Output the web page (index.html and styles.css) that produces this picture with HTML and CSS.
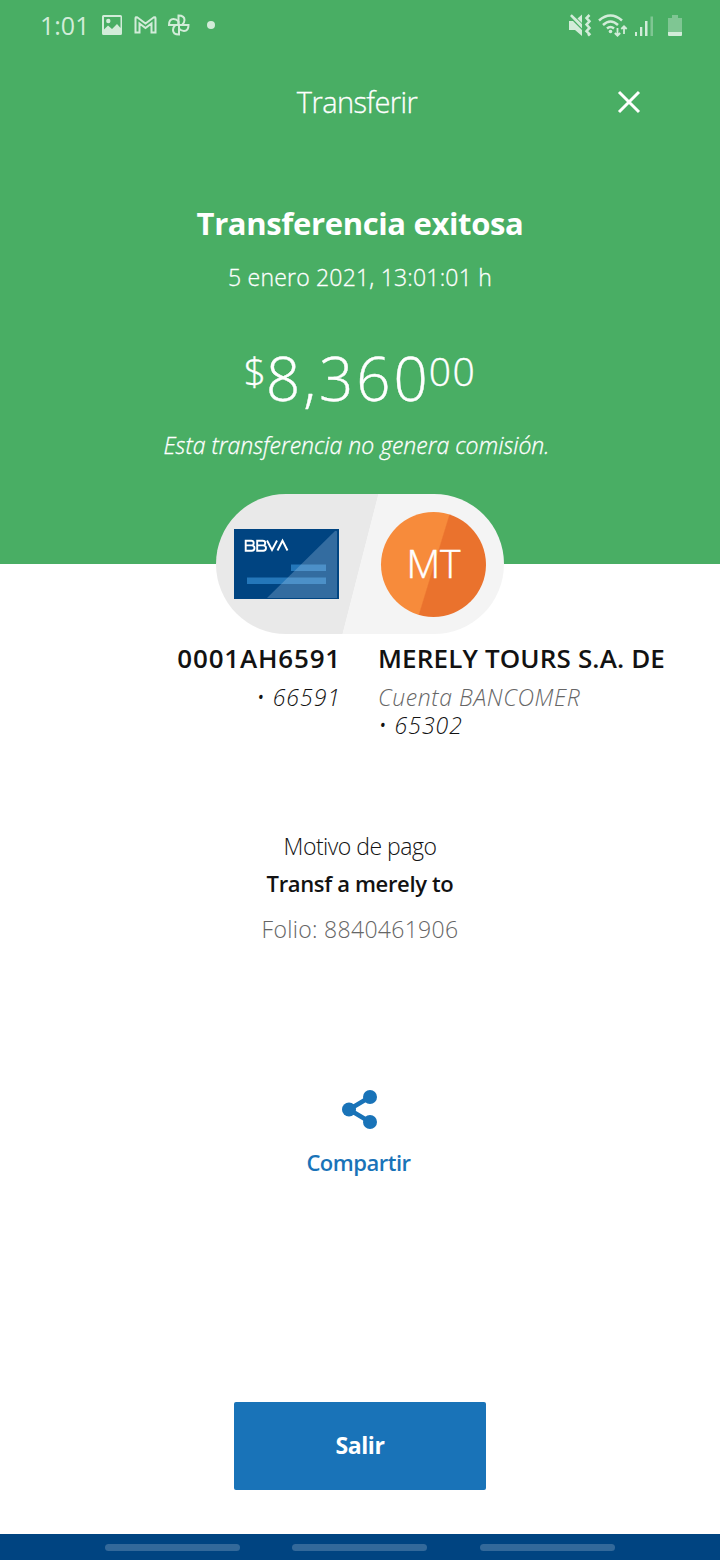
FILE: index.html
```html
<!DOCTYPE html>
<html lang="es">
<head>
  <meta charset="UTF-8" />
  <meta name="viewport" content="width=device-width, initial-scale=1.0"/>
  <title>Transferir</title>
  <link rel="stylesheet" href="styles.css">
</head>
<body>

  <section class="hero">
    <div class="status">
      <span class="clock">1:01</span>
      <svg class="status-left" width="120" height="26" viewBox="0 0 120 26">
        <path fill-rule="evenodd" d="M2.500 3h17q1.500 0 1.500 1.500v17q0 1.500-1.500 1.500h-17q-1.500 0-1.500-1.500v-17q0-1.500 1.500-1.500zM3 5v12.500l4-4 4 3.500 5-5 3.500 4V5z"/>
        <circle cx="7.300" cy="9" r="2.200"/>
        <path class="line" d="M34.500 20.500V6.500q0-2 2-1l8 6 8-6q2-1 2 1v14h-4v-9l-6 4.500-6-4.500v9z"/>
        <g class="line">
          <path d="M77.500 13V3.500q6 0 6 4.500 0 3-2.500 5z"/>
          <path d="M78 13h9.500q0 6-4.500 6-3 0-5-2.500z"/>
          <path d="M78 13v9.500q-6 0-6-4.500 0-3 2.500-5z"/>
          <path d="M77.500 13H68q0-6 4.500-6 3 0 5 2.500z"/>
        </g>
        <circle cx="110" cy="13" r="4"/>
      </svg>
      <svg class="status-right" width="120" height="26" viewBox="0 0 120 26">
        <path d="M1 9h4l9 9v6l-7-6H1zM9.500 6.500l4.500-4V11zM2 4l1.800-1.800L14 12v4.500z"/>
        <path class="line wave" d="M21.500 3l-3 3 3 3.300-3 3.300 3 3.300-3 3.300 3 3-1.500 1.500"/>
        <path class="line wave" d="M31 8.500q11.500-10 23 0M35 13q7.500-7 15 0M39 16.500q3.500-3 7 0"/>
        <circle cx="42.500" cy="19.500" r="1.800"/>
        <path class="line arrows" d="M49.500 16v7.500M46.800 21l2.700 2.700 2.700-2.700M56 22v-7.500M53.300 17l2.700-2.700 2.700 2.700"/>
        <path d="M67 20h2v4h-2zM72 15h2.300v9H72zM77 9h2.500v15H77z"/>
        <path opacity=".4" d="M82.500 4.500H85V24h-2.500z"/>
        <path opacity=".4" d="M104 3h6v3h4v14h-14V6h4z"/>
        <path d="M100 20h14v3q0 1-1 1h-12q-1 0-1-1z"/>
      </svg>
    </div>

    <header>
      <h1>Transferir</h1>
      <svg class="close" width="26" height="26" viewBox="0 0 26 26">
        <path d="M3 3l20 20M23 3L3 23"/>
      </svg>
    </header>

    <h2>Transferencia exitosa</h2>
    <p class="date">5 enero 2021, 13:01:01 h</p>
    <div class="amount">
      <span class="small">$</span><span class="big">8,360</span><span class="small cents">00</span>
    </div>
    <p class="note">Esta transferencia no genera comisión.</p>
  </section>

  <section class="accounts">
    <div class="pill">
      <svg class="card" width="105" height="70" viewBox="0 0 105 70">
        <rect width="105" height="70" fill="#004481"/>
        <rect x="57" y="35.500" width="35" height="6.500" fill="#2477ba"/>
        <rect x="13" y="48.500" width="79" height="6.500" fill="#2477ba"/>
        <path d="M33 69L101 2q2-1 2 1v66z" fill="#a8cbe8" opacity=".3"/>
        <g class="bbva">
          <path d="M11.700 11.800h5.500q2.500 0 2.500 2.300t-2.500 2.300h-5.500h6q2.800 0 2.800 2.700t-2.800 2.700h-6z"/>
          <path d="M23.200 11.800h5.500q2.500 0 2.500 2.300t-2.500 2.300h-5.500h6q2.800 0 2.800 2.700t-2.800 2.700h-6z"/>
          <path d="M33 11.500l5 9.500 5-9.500M43.500 21.500l5-9.800 5 9.800"/>
        </g>
      </svg>
      <div class="avatar">MT</div>
    </div>
    <div class="names">
      <div class="from">
        <h3>0001AH6591</h3>
        <p>• 66591</p>
      </div>
      <div class="to">
        <h3>MERELY TOURS S.A. DE</h3>
        <p class="bank">Cuenta BANCOMER</p>
        <p>• 65302</p>
      </div>
    </div>
  </section>

  <section class="details">
    <p class="label">Motivo de pago</p>
    <p class="reason">Transf a merely to</p>
    <p class="folio">Folio: 8840461906</p>
  </section>

  <section class="share">
    <svg width="36" height="40" viewBox="0 0 36 40">
      <path d="M28 7L7 19.500 28 32"/>
      <circle cx="28" cy="7" r="7"/>
      <circle cx="7" cy="19.500" r="7"/>
      <circle cx="28" cy="32" r="7"/>
    </svg>
    <span>Compartir</span>
  </section>

  <button class="exit">Salir</button>

  <nav>
    <span></span>
    <span></span>
    <span></span>
  </nav>

</body>
</html>
```
FILE: styles.css
```css
* {
  margin: 0; padding: 0; box-sizing: border-box;
  font-family: 'Open Sans', sans-serif;
}

body {
  height: 1560px;
  display: flex;
  flex-direction: column;
  background: #fff;
  color: #121212;
  font-size: 23px;
  font-weight: 300;
  overflow: hidden;
}

p {
  white-space: nowrap;
}

.hero {
  height: 564px;
  flex-shrink: 0;
  background: #49ae64;
  color: #fff;
  text-align: center;
}

.status {
  height: 50px;
  padding: 0 32px 0 40px;
  display: flex;
  align-items: center;
  color: #d2ecd9;
}

.status svg {
  fill: #d2ecd9;
}

.status .line {
  fill: none;
  stroke: #d2ecd9;
  stroke-width: 2;
}

.status .wave {
  stroke-width: 2.5;
}

.status .arrows {
  stroke-width: 1.8;
}

.clock {
  width: 61px;
  font-size: 25px;
  font-weight: 400;
  text-align: left;
}

.status-right {
  margin-left: auto;
}

header {
  height: 102px;
  padding: 0 78px 0 98px;
  display: flex;
  align-items: center;
}

header h1 {
  flex: 1;
  font-size: 29px;
  font-weight: 300;
  letter-spacing: -0.6px;
  -webkit-text-stroke: 0.3px;
}

.close {
  margin-top: 1px;
  fill: none;
  stroke: #fff;
  stroke-width: 3;
}

.hero h2 {
  margin-top: 51px;
  font-size: 31px;
  font-weight: 700;
  line-height: 40px;
  letter-spacing: -0.35px;
}

.date {
  margin-top: 18px;
  line-height: 32px;
  letter-spacing: 0.2px;
  -webkit-text-stroke: 0.3px;
}

.amount {
  margin-top: 55px;
  height: 60px;
  display: flex;
  justify-content: center;
  -webkit-text-stroke: 0.4px;
}

.big {
  font-size: 60px;
  line-height: 60px;
  letter-spacing: 3px;
}

.small {
  font-size: 39px;
  line-height: 45px;
}

.cents {
  margin-left: -2px;
  letter-spacing: 1.5px;
}

.note {
  margin-top: 21px;
  padding-right: 7px;
  font-style: italic;
  line-height: 32px;
  -webkit-text-stroke: 0.3px;
}

.accounts {
  height: 261px;
  margin-top: -70px;
  flex-shrink: 0;
}

.pill {
  width: 288px;
  height: 140px;
  margin: 0 auto;
  padding: 0 18px;
  display: flex;
  align-items: center;
  justify-content: space-between;
  border-radius: 70px;
  background: linear-gradient(104.4deg, #e9e9e9 50%, #f4f4f4 50.2%);
}

.bbva {
  fill: none;
  stroke: #fff;
  stroke-width: 1.9;
}

.avatar {
  width: 105px;
  height: 105px;
  border-radius: 50%;
  background: linear-gradient(107deg, #f78b3b 50%, #ea722d 51%);
  color: #fff;
  font-size: 39px;
  line-height: 101px;
  text-align: center;
  -webkit-text-stroke: 0.5px;
}

.names {
  display: flex;
  gap: 37px;
  padding-top: 7px;
}

.names h3 {
  margin-bottom: 8px;
  font-size: 26px;
  font-weight: 600;
  line-height: 34px;
  letter-spacing: 0.15px;
  white-space: nowrap;
}

.names p {
  font-style: italic;
  line-height: 28px;
  letter-spacing: 1px;
}

.from {
  width: 341px;
  text-align: right;
}

.from h3 {
  letter-spacing: 0.8px;
}

.names .bank {
  color: #666;
  letter-spacing: 0.6px;
}

.details {
  margin-top: 74px;
  text-align: center;
}

.details p {
  line-height: 34px;
}

.details .label {
  letter-spacing: -0.5px;
}

.details .reason {
  margin-top: 3px;
  font-size: 22px;
  font-weight: 600;
  letter-spacing: -0.35px;
}

.details .folio {
  margin-top: 12px;
  color: #666;
  letter-spacing: 0.3px;
}

.share {
  margin-top: 144px;
  display: flex;
  flex-direction: column;
  align-items: center;
  color: #1973b8;
  font-weight: 600;
}

.share svg {
  fill: #1973b8;
}

.share path {
  fill: none;
  stroke: #1973b8;
  stroke-width: 4.5;
}

.share span {
  margin-top: 16px;
  padding-right: 3px;
  font-size: 22px;
  line-height: 32px;
  letter-spacing: -0.5px;
}

.exit {
  width: 252px;
  height: 88px;
  margin: auto auto 44px;
  padding-bottom: 3px;
  border: none;
  border-radius: 2px;
  background: #1973b8;
  color: #fff;
  font-size: 23px;
  font-weight: 700;
  letter-spacing: -0.4px;
}

nav {
  height: 26px;
  padding-right: 1px;
  display: flex;
  align-items: center;
  justify-content: center;
  gap: 52.5px;
  background: #004481;
}

nav span {
  width: 135px;
  height: 7px;
  border-radius: 4px;
  background: #33699a;
}
```
